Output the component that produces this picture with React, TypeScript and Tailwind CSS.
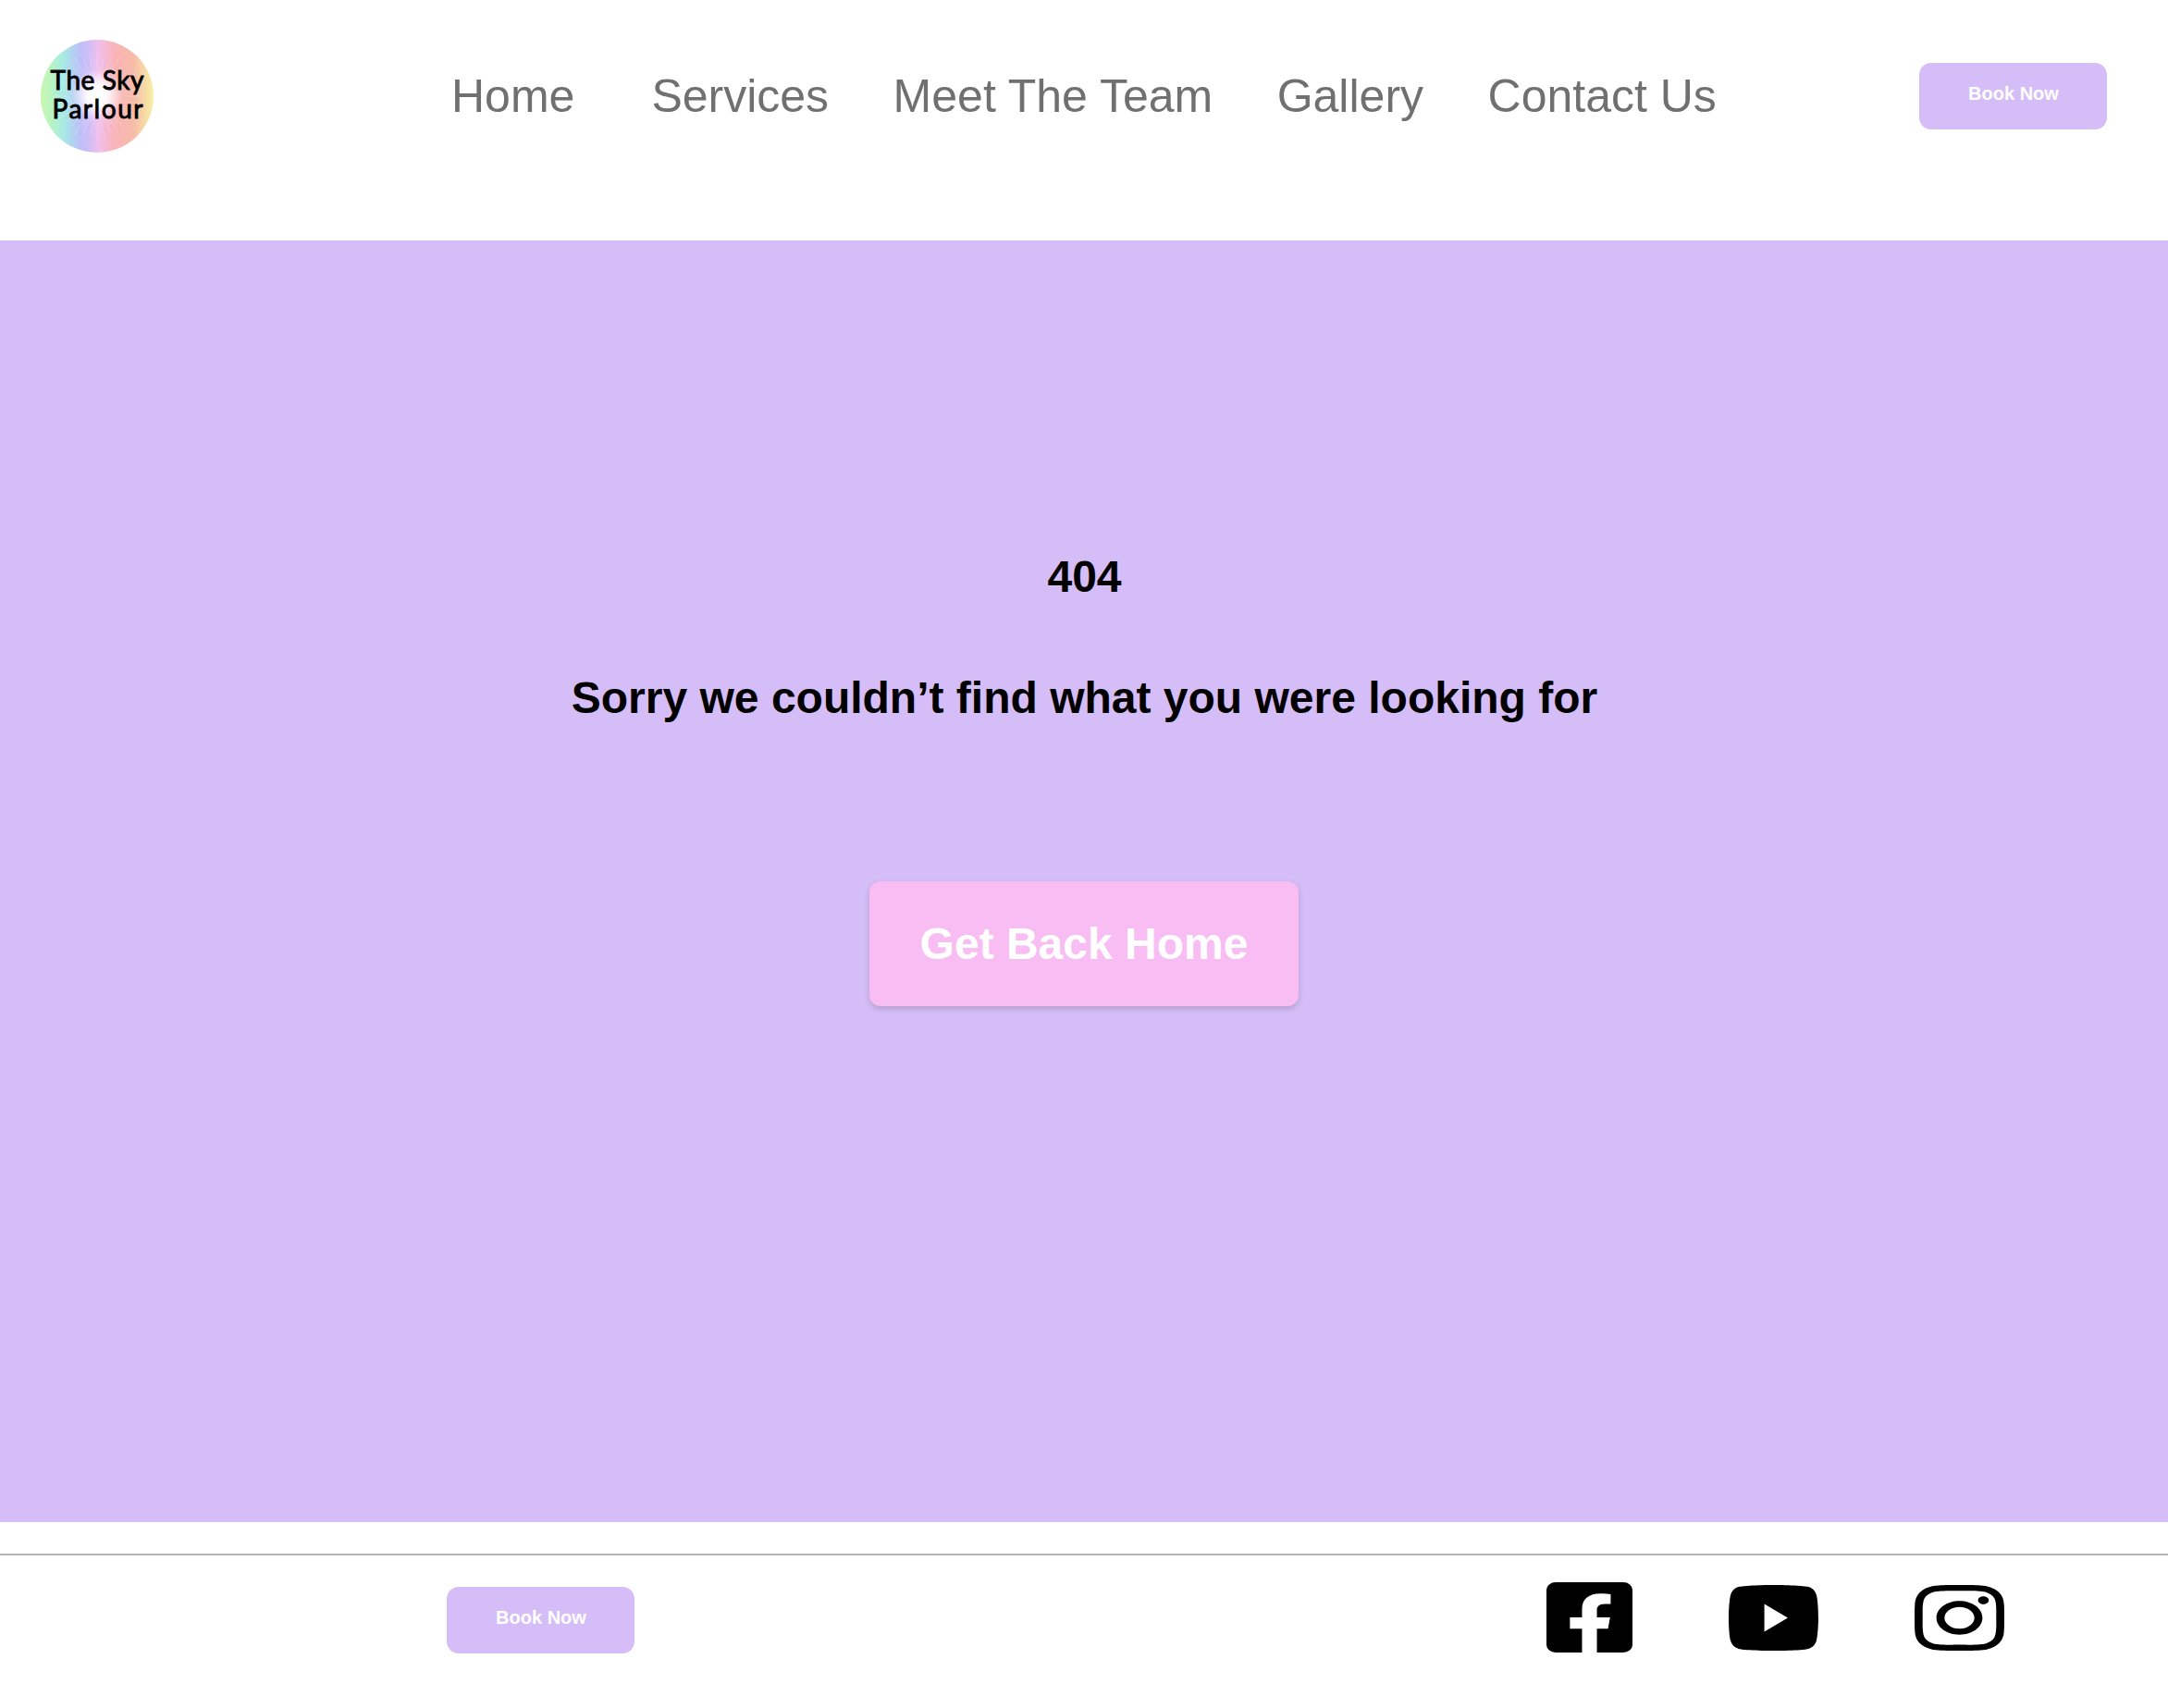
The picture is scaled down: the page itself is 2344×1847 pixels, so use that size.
import React from "react";
import { FaFacebookSquare, FaInstagram, FaYoutube } from "react-icons/fa";

const rays = Array.from({ length: 72 }, (_, i) => {
  const angle = (i * Math.PI) / 36;
  const length = [48, 34, 42, 30, 45, 38][i % 6];
  return { x: 61 + Math.cos(angle) * length, y: 61 + Math.sin(angle) * length };
});

function Logo() {
  return (
    <svg viewBox="0 0 122 122" className="h-[122px] w-[122px] shrink-0" role="img" aria-label="The Sky Parlour">
      <defs>
        <linearGradient id="rainbow" x1="0" x2="1" y1="0" y2="0">
          <stop offset="0" stopColor="#c9f7ae" />
          <stop offset="0.09" stopColor="#b9f4c0" />
          <stop offset="0.2" stopColor="#a6ebe6" />
          <stop offset="0.35" stopColor="#bdbff8" />
          <stop offset="0.42" stopColor="#cdbdf7" />
          <stop offset="0.51" stopColor="#f0bfec" />
          <stop offset="0.66" stopColor="#f9b3b6" />
          <stop offset="0.82" stopColor="#f7bba9" />
          <stop offset="0.92" stopColor="#f6d9a6" />
          <stop offset="1" stopColor="#f7f0a5" />
        </linearGradient>
        <radialGradient id="glow">
          <stop offset="0" stopColor="#fff" />
          <stop offset="0.4" stopColor="#fff" stopOpacity="0.9" />
          <stop offset="1" stopColor="#fff" stopOpacity="0" />
        </radialGradient>
      </defs>
      <circle cx="61" cy="61" r="61" fill="url(#rainbow)" />
      {rays.map((ray, i) => (
        <line key={i} x1="61" y1="61" x2={ray.x} y2={ray.y} stroke="#fff" strokeWidth="0.6" strokeOpacity="0.4" />
      ))}
      <circle cx="61" cy="60" r="27" fill="url(#glow)" />
      <g className="font-['Lato'] font-normal" fontSize="28" stroke="#000" strokeWidth="0.9">
        <text x="10.5" y="54" textLength="101" lengthAdjust="spacing">The Sky</text>
        <text x="12.5" y="84.5" textLength="98" lengthAdjust="spacing">Parlour</text>
      </g>
    </svg>
  );
}

function BookButton() {
  return (
    <button className="flex h-[72px] w-[203px] shrink-0 items-center justify-center rounded-[13px] bg-[#d5bdf7] pb-[6px] pl-px text-[20px] leading-none font-bold text-white">
      Book Now
    </button>
  );
}

export default function App() {
  return (
    <div className="flex h-[1847px] w-[2344px] flex-col bg-white font-['Liberation_Sans',Arial,sans-serif] text-black">
      <header className="flex h-[260px] shrink-0 items-start pt-[43px] pr-[66px] pl-11">
        <div className="flex h-[122px] w-full items-center">
          <Logo />
          <nav className="ml-[322px] flex gap-[69.5px] text-[50px] leading-none whitespace-nowrap text-[#707070]">
            <a className="mr-[13.5px]">Home</a>
            <a>Services</a>
            <a>Meet The Team</a>
            <a>Gallery</a>
            <a>Contact Us</a>
          </nav>
          <div className="ml-auto">
            <BookButton />
          </div>
        </div>
      </header>

      <main className="flex h-[1386px] shrink-0 flex-col items-center bg-[#d5bdf7] pt-[340px] text-[48px] leading-none font-bold">
        <h1 className="pl-px">404</h1>
        <p className="mt-[83px] pl-px">Sorry we couldn’t find what you were looking for</p>
        <button className="mt-[174px] flex h-[135px] w-[464px] items-center justify-center rounded-[12px] bg-[#f8bdf2] text-white shadow-[0_3px_6px_rgba(0,0,0,0.16)]">
          Get Back Home
        </button>
      </main>

      <footer className="mt-[34px] flex items-start border-t-2 border-[#b5b5b5] pl-[483px]">
        <div className="mt-[33.5px]">
          <BookButton />
        </div>
        <div className="mt-[29px] ml-[986px] flex h-[76px] items-center">
          <FaFacebookSquare viewBox="0 32 448 448" preserveAspectRatio="none" className="h-[76px] w-[93px]" />
          <FaYoutube viewBox="14.9 64 546.2 384" preserveAspectRatio="none" className="ml-[104px] h-[71px] w-[97px]" />
          <FaInstagram viewBox="0 32 448 448" preserveAspectRatio="none" className="ml-[104px] h-[71px] w-[97px]" />
        </div>
      </footer>
    </div>
  );
}
